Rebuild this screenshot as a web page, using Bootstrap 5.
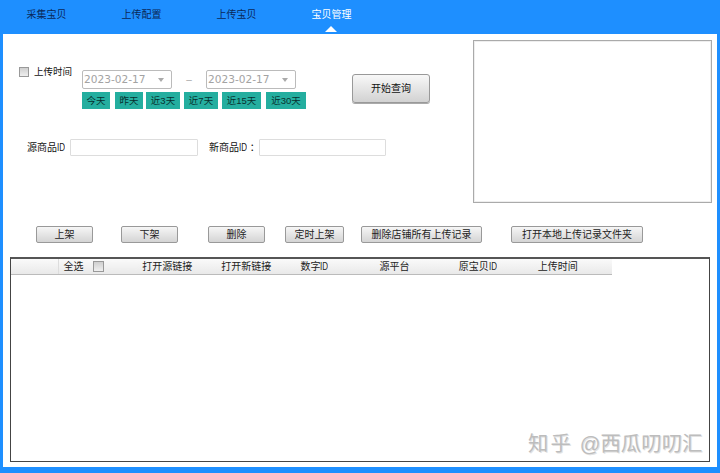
<!DOCTYPE html>
<html lang="zh">
<head>
<meta charset="utf-8">
<title>宝贝管理</title>
<link href="https://cdn.jsdelivr.net/npm/bootstrap@5.3.0/dist/css/bootstrap.min.css" rel="stylesheet">
<style>
html,body{height:473px;overflow:hidden}
body{background:#1e8fff;font-family:"Liberation Sans","Noto Sans CJK SC",sans-serif;font-size:10px;color:#111;line-height:1.2}
.app-nav{height:34px;padding-left:3px}
.app-tab{width:95px;padding:8px 0 0 0;text-align:center;color:#0a2858;font-size:10px;line-height:14px;position:relative}
.app-tab:first-child{margin-left:-4px}
.app-tab.is-on{color:#fff}
.app-tab.is-on::after{content:"";position:absolute;left:41px;top:26px;border-left:6px solid transparent;border-right:6px solid transparent;border-bottom:6px solid #fff}
.app-panel{background:#fff;height:433px;margin:0 3px;padding-top:6px;position:relative}
.top-zone{height:163px}
.left-zone{width:470px}
.row-a{padding:25px 0 0 16px}
input[type=checkbox].app-check{width:10px;height:10px;margin:2px 5px 0 0;border:1px solid #999;background:linear-gradient(#cfcfcf,#efefef);border-radius:0;flex:none}
.time-label{width:48px;line-height:13px;font-size:9.5px}
.date-block{margin-top:5px;width:224px}
.date-sel{width:90px;height:19px;padding:0 0 0 1px;font-family:"DejaVu Sans",sans-serif;font-size:10.6px;line-height:17px;color:#a3a3a3;border:1px solid #bbb;border-radius:2px;background-size:8px 6px;background-position:right 6px center;background-image:url("data:image/svg+xml,%3Csvg xmlns='http://www.w3.org/2000/svg' viewBox='0 0 8 6'%3E%3Cpath d='M1 1h6L4 5z' fill='%23aaa'/%3E%3C/svg%3E")}
.date-dash{width:34px;text-align:center;color:#aaa;font-size:10px}
.quick-row{margin-top:3px}
.quick-btn{height:17px;padding:0;border:0;border-radius:0;background:#24ae9f;color:#07302e;font-size:9.5px;line-height:17px}
.q1{width:28px}.q2{width:28px;margin-left:5px}.q3{width:34px;margin-left:3px}.q4{width:34px;margin-left:4px}.q5{width:39px;margin-left:4px}.q6{width:40px;margin-left:5px}
.go-btn{width:78px;height:29px;margin:9px 0 0 46px;padding:0;font-size:10px;color:#111;border:1px solid #999;border-radius:3px;background:linear-gradient(#f8f8f8,#d2d2d2);box-shadow:0 1px 0 #aaa}
.row-b{margin-top:30px;padding-left:24px}
.id-label{line-height:17px;font-size:10px;white-space:nowrap;width:39px}
.id-input{height:17px;padding:0;border:1px solid #ddd;border-radius:1px}
.in1{width:128px;margin-left:4px}
.lb2{margin-left:11px;width:46px}
.in2{width:127px;margin-left:4px}
.id-txt{display:inline-block;width:8px;transform:scaleX(.8);transform-origin:0 50%}
.log-box{width:239px;height:163px;border:1px solid #aaa;box-shadow:inset 0 0 0 1px #eee;flex:none;margin-right:5px}
.act-row{margin-top:23px;padding-left:33px;height:17px}
.act-btn{height:17px;padding:0;font-size:10px;line-height:15px;color:#222;border:1px solid #999;border-radius:2px;background:linear-gradient(#f6f6f6,#d4d4d4)}
.a1{width:57px}.a2{width:57px;margin-left:28px}.a3{width:57px;margin-left:30px}.a4{width:59px;margin-left:20px}.a5{width:121px;margin-left:17px}.a6{width:132px;margin-left:29px}
.grid-box{margin:14px 0 0 7px;width:700px;height:205px;border:1px solid #444;border-top:2px solid #555}
.grid-table{table-layout:fixed;width:601px;margin:0;font-size:10px}
.grid-table th{height:15px;padding:0 0 0 5px;font-weight:400;color:#222;line-height:14px;white-space:nowrap;border:0;border-bottom:1px solid #bbb;background:linear-gradient(#fafafa,#e9e9e9);box-shadow:none}
.grid-table .col-lead{width:47px;border-right:1px solid #ddd}
.grid-table .col-std{width:79px}
input[type=checkbox].head-check{width:11px;height:11px;margin:0 0 0 9px;vertical-align:-2px;border:1px solid #999;background:linear-gradient(#cfcfcf,#efefef);border-radius:0}
.water-mark{position:absolute;left:525px;top:397px;font-size:20.4px;line-height:26px;color:#bdbdbd;white-space:nowrap;text-shadow:1px 1px 0 #e2e2e2}
.wm-zh{letter-spacing:2px}
.wm-at{margin-left:7px}
</style>
</head>
<body>
<nav class="app-nav d-flex">
  <div class="app-tab">采集宝贝</div>
  <div class="app-tab">上传配置</div>
  <div class="app-tab">上传宝贝</div>
  <div class="app-tab is-on">宝贝管理</div>
</nav>
<main class="app-panel">
  <section class="top-zone d-flex">
    <div class="left-zone">
      <div class="row-a d-flex align-items-start">
        <input class="form-check-input app-check" type="checkbox" aria-label="上传时间">
        <div class="time-label">上传时间</div>
        <div class="date-block">
          <div class="d-flex align-items-center">
            <select class="form-select date-sel"><option>2023-02-17</option></select>
            <div class="date-dash">–</div>
            <select class="form-select date-sel"><option>2023-02-17</option></select>
          </div>
          <div class="quick-row d-flex">
            <button class="btn quick-btn q1">今天</button>
            <button class="btn quick-btn q2">昨天</button>
            <button class="btn quick-btn q3">近3天</button>
            <button class="btn quick-btn q4">近7天</button>
            <button class="btn quick-btn q5">近15天</button>
            <button class="btn quick-btn q6">近30天</button>
          </div>
        </div>
        <button class="btn go-btn">开始查询</button>
      </div>
      <div class="row-b d-flex">
        <div class="id-label">源商品<span class="id-txt">ID</span></div>
        <input class="form-control id-input in1" type="text" aria-label="源商品ID">
        <div class="id-label lb2">新商品<span class="id-txt">ID</span> ：</div>
        <input class="form-control id-input in2" type="text" aria-label="新商品ID">
      </div>
    </div>
    <div class="log-box"></div>
  </section>
  <div class="act-row d-flex">
    <button class="btn act-btn a1">上架</button>
    <button class="btn act-btn a2">下架</button>
    <button class="btn act-btn a3">删除</button>
    <button class="btn act-btn a4">定时上架</button>
    <button class="btn act-btn a5">删除店铺所有上传记录</button>
    <button class="btn act-btn a6">打开本地上传记录文件夹</button>
  </div>
  <div class="grid-box">
    <table class="table grid-table">
      <thead>
        <tr>
          <th class="col-lead"></th>
          <th class="col-std">全选<input class="form-check-input head-check" type="checkbox" aria-label="全选"></th>
          <th class="col-std">打开源链接</th>
          <th class="col-std">打开新链接</th>
          <th class="col-std">数字<span class="id-txt">ID</span></th>
          <th class="col-std">源平台</th>
          <th class="col-std">原宝贝<span class="id-txt">ID</span></th>
          <th class="col-std">上传时间</th>
        </tr>
      </thead>
    </table>
  </div>
  <div class="water-mark"><span class="wm-zh">知乎</span><span class="wm-at">@西瓜叨叨汇</span></div>
</main>
</body>
</html>
